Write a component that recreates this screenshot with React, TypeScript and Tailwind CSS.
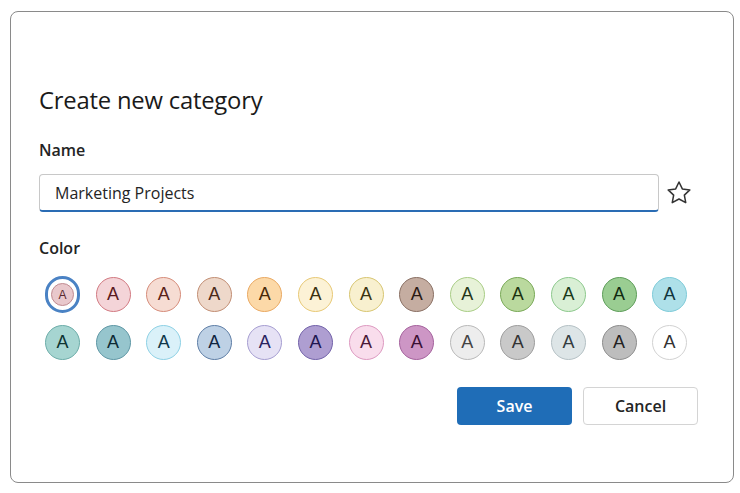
const swatches: { bg: string; border: string; text: string }[][] = [
  [
    { bg: "bg-[#e9c8cc]", border: "border-[#c08a90]", text: "text-[#5a2a30]" },
    { bg: "bg-[#f4d4d8]", border: "border-[#d27a82]", text: "text-[#5a1a20]" },
    { bg: "bg-[#f6dcd3]", border: "border-[#d68c7a]", text: "text-[#5a2218]" },
    { bg: "bg-[#eed8ca]", border: "border-[#c28e74]", text: "text-[#4a2a1a]" },
    { bg: "bg-[#fcd9a8]", border: "border-[#eaa962]", text: "text-[#4a2a08]" },
    { bg: "bg-[#fcf2d6]", border: "border-[#e8c976]", text: "text-[#3a3010]" },
    { bg: "bg-[#f8f0cf]", border: "border-[#d8c672]", text: "text-[#3a3410]" },
    { bg: "bg-[#c5ada1]", border: "border-[#8a7064]", text: "text-[#2a1a14]" },
    { bg: "bg-[#e7f2d8]", border: "border-[#a9cd86]", text: "text-[#24361a]" },
    { bg: "bg-[#bad99e]", border: "border-[#79a957]", text: "text-[#1c3210]" },
    { bg: "bg-[#d9efd5]", border: "border-[#8dc98d]", text: "text-[#1a3a1a]" },
    { bg: "bg-[#9acd92]", border: "border-[#5d9d59]", text: "text-[#102a10]" },
    { bg: "bg-[#aee0e9]", border: "border-[#7ecbd9]", text: "text-[#10343c]" },
  ],
  [
    { bg: "bg-[#a6d5d1]", border: "border-[#6cada9]", text: "text-[#0e3432]" },
    { bg: "bg-[#96c5cd]", border: "border-[#5e97a5]", text: "text-[#0c2a34]" },
    { bg: "bg-[#daf1f9]", border: "border-[#8ed1e5]", text: "text-[#10384a]" },
    { bg: "bg-[#bed1e5]", border: "border-[#5e7ea6]", text: "text-[#0e2440]" },
    { bg: "bg-[#e6e2f5]", border: "border-[#a69ed1]", text: "text-[#2a2460]" },
    { bg: "bg-[#ae9ed1]", border: "border-[#7262a9]", text: "text-[#201650]" },
    { bg: "bg-[#f9ddec]", border: "border-[#dd9ac1]", text: "text-[#4a1a38]" },
    { bg: "bg-[#cd96c5]", border: "border-[#a5629d]", text: "text-[#3a1034]" },
    { bg: "bg-[#ededed]", border: "border-[#b9b9b9]", text: "text-[#444444]" },
    { bg: "bg-[#c9c9c9]", border: "border-[#9d9d9d]", text: "text-[#333333]" },
    { bg: "bg-[#dde5e7]", border: "border-[#b5c1c5]", text: "text-[#333c40]" },
    { bg: "bg-[#bdbdbd]", border: "border-[#8d8d8d]", text: "text-[#222222]" },
    { bg: "bg-white", border: "border-[#d2d2d2]", text: "text-[#333333]" },
  ],
];

const Swatch = ({
  bg,
  border,
  text,
  selected,
}: {
  bg: string;
  border: string;
  text: string;
  selected?: boolean;
}) => {
  if (selected) {
    return (
      <button
        type="button"
        aria-label="Selected color"
        className="flex size-[37px] items-center justify-center rounded-full border-[3px] border-[#4a82c4] bg-white"
      >
        <span
          className={`flex size-[23px] items-center justify-center rounded-full border ${bg} ${border} ${text} text-[12px]`}
        >
          A
        </span>
      </button>
    );
  }
  return (
    <button
      type="button"
      className={`flex size-[35px] items-center justify-center rounded-full border ${bg} ${border} ${text} text-[18px]`}
    >
      A
    </button>
  );
};

const StarIcon = () => (
  <svg width="28" height="28" viewBox="0 0 24 24" fill="none" stroke="#333" strokeWidth="1.3" strokeLinejoin="round">
    <path d="M12 2.6l2.85 5.9 6.45.85-4.72 4.5 1.2 6.4L12 17.15 6.22 20.25l1.2-6.4L2.7 9.35l6.45-.85z" />
  </svg>
);

export default function App() {
  return (
    <div className="h-[493px] w-[740px] bg-white pl-[10px] pt-[11px] font-['Open_Sans',sans-serif] text-[#242424]">
      <div className="h-[472px] w-[724px] rounded-[8px] border border-[#8a8a8a] pl-[28px] pt-[74px]">
        <h1 className="text-[23.8px] leading-[28px] font-normal tracking-[-0.2px] text-[#1a1a1a]">
          Create new category
        </h1>

        <label htmlFor="cat-name" className="mt-[26px] block text-[16px] leading-[20px] font-semibold">
          Name
        </label>
        <div className="mt-[14px] flex items-center gap-[6px]">
          <div className="flex h-[38px] w-[620px] items-center rounded-[4px] border border-[#c8c8c8] border-b-2 border-b-[#2a6cb4] px-[15px]">
            <input
              id="cat-name"
              defaultValue="Marketing Projects"
              className="w-full bg-transparent text-[16px] text-[#242424] outline-none"
            />
          </div>
          <StarIcon />
        </div>

        <p className="mt-[26px] text-[16px] leading-[20px] font-semibold">Color</p>

        <div className="mt-[19px] flex flex-col gap-[13px] font-['Liberation_Sans',sans-serif]">
          {swatches.map((row, r) => (
            <div key={r} className="flex items-center gap-[15.6px] pl-[6px]">
              {row.map((s, i) => (
                <div key={i} className="flex size-[35px] items-center justify-center">
                  <Swatch {...s} selected={r === 0 && i === 0} />
                </div>
              ))}
            </div>
          ))}
        </div>

        <div className="mt-[27px] flex justify-end gap-[11px] pr-[35px]">
          <button
            type="button"
            className="h-[38px] w-[115px] rounded-[4px] bg-[#1f6db7] text-[16px] font-semibold text-white"
          >
            Save
          </button>
          <button
            type="button"
            className="h-[38px] w-[115px] rounded-[4px] border border-[#d4d4d4] bg-white text-[16px] font-semibold text-[#242424]"
          >
            Cancel
          </button>
        </div>
      </div>
    </div>
  );
}
